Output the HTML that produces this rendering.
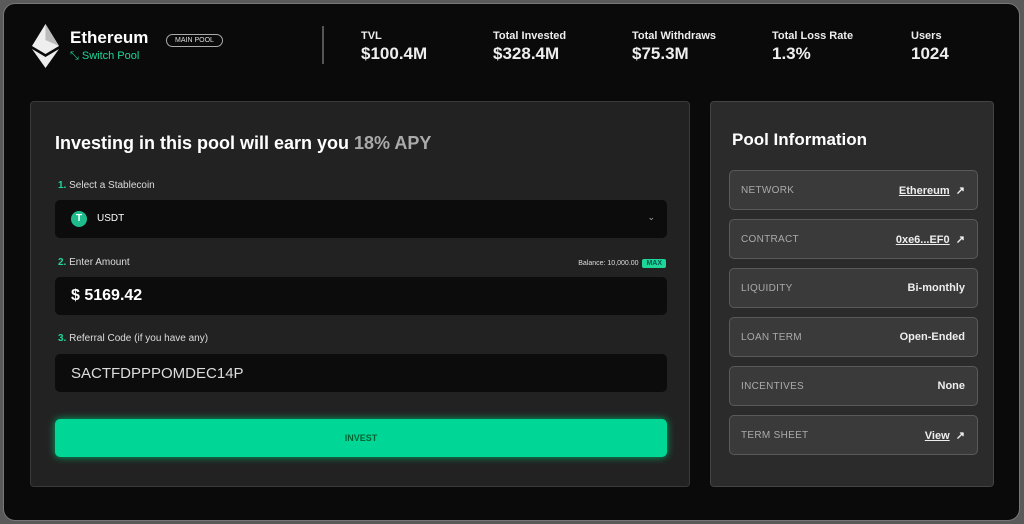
<!DOCTYPE html>
<html><head><style>
*{margin:0;padding:0;box-sizing:border-box}
body{width:1024px;height:524px;background:#5a5a5a;font-family:"Liberation Sans",sans-serif;color:#fff;overflow:hidden;position:relative}
.frame{position:absolute;left:3px;top:3px;width:1017px;height:518px;background:#0a0a0a;border-radius:12px;border:1px solid #777}
.abs{position:absolute}
.stat .l{font-size:11px;font-weight:bold;color:#eee}
.stat .v{font-size:17px;font-weight:bold;margin-top:2px;color:#eee}
.left{left:30px;top:101px;width:660px;height:386px;background:#222;border:1px solid #3a3a3a;border-radius:4px}
.right{left:710px;top:101px;width:284px;height:386px;background:#2b2b2b;border:1px solid #444;border-radius:4px}
.lab{font-size:10px;color:#ddd}
.lab b{color:#1ed796}
.inp{left:24px;width:612px;height:38px;background:#0c0c0c;border-radius:5px}
.row{position:absolute;left:18px;width:249px;height:40px;background:#3a3a3a;border:1px solid #5a5a5a;border-radius:5px;font-size:10px}
.row .k{position:absolute;left:11px;top:14px;color:#aaa;letter-spacing:.3px}
.row .v{position:absolute;right:12px;top:13px;font-weight:bold;font-size:11px;color:#eee}
.row .v u{text-decoration:underline}
</style></head><body>
<div class="frame"></div>
<svg class="abs" style="left:32px;top:24px" width="27" height="44" viewBox="0 0 27 44"><polygon points="13.5,0 27,22 13.5,30 0,22" fill="#eee"/><polygon points="13.5,0 27,22 13.5,16" fill="#bbb"/><polygon points="13.5,33 27,25 13.5,44 0,25" fill="#eee"/></svg>
<div class="abs" style="left:70px;top:28px;font-size:17px;font-weight:bold">Ethereum</div>
<div class="abs" style="left:70px;top:50px;font-size:11px;color:#1ed796">⤡ Switch Pool</div>
<div class="abs" style="left:166px;top:34px;width:57px;height:13px;border:1px solid #aaa;border-radius:7px;font-size:7px;text-align:center;line-height:11px;color:#ddd">MAIN POOL</div>
<div class="abs" style="left:322px;top:26px;width:2px;height:38px;background:#555"></div>
<div class="abs stat" style="left:361px;top:30px"><div class="l">TVL</div><div class="v">$100.4M</div></div>
<div class="abs stat" style="left:493px;top:30px"><div class="l">Total Invested</div><div class="v">$328.4M</div></div>
<div class="abs stat" style="left:632px;top:30px"><div class="l">Total Withdraws</div><div class="v">$75.3M</div></div>
<div class="abs stat" style="left:772px;top:30px"><div class="l">Total Loss Rate</div><div class="v">1.3%</div></div>
<div class="abs stat" style="left:911px;top:30px"><div class="l">Users</div><div class="v">1024</div></div>
<div class="abs left">
<div class="abs" style="left:24px;top:31px;font-size:18px;font-weight:bold">Investing in this pool will earn you <span style="color:#aaa">18% APY</span></div>
<div class="abs lab" style="left:27px;top:78px"><b>1.</b> Select a Stablecoin</div>
<div class="abs inp" style="top:98px"><div class="abs" style="left:16px;top:11px;width:16px;height:16px;border-radius:50%;background:#1ebc8c;font-size:10px;text-align:center;line-height:16px;font-weight:bold">T</div><div class="abs" style="left:42px;top:13px;font-size:10px">USDT</div><div class="abs" style="right:12px;top:12px;font-size:9px;color:#aaa">⌄</div></div>
<div class="abs lab" style="left:27px;top:155px"><b>2.</b> Enter Amount</div>
<div class="abs" style="right:23px;top:158px;font-size:7px;color:#ddd">Balance: 10,000.00 &nbsp;<span style="background:#1ed796;color:#055;padding:1px 4px;border-radius:2px;font-weight:bold">MAX</span></div>
<div class="abs inp" style="top:175px"><div class="abs" style="left:16px;top:10px;font-size:16px;font-weight:bold">$ 5169.42</div></div>
<div class="abs lab" style="left:27px;top:231px"><b>3.</b> Referral Code (if you have any)</div>
<div class="abs inp" style="top:252px"><div class="abs" style="left:16px;top:11px;font-size:15px;color:#ddd">SACTFDPPPOMDEC14P</div></div>
<div class="abs" style="left:24px;top:317px;width:612px;height:38px;background:#00d696;border-radius:5px;box-shadow:0 0 8px #0a6;text-align:center;line-height:38px;font-size:9px;font-weight:bold;color:#063">INVEST</div>
</div>
<div class="abs right">
<div class="abs" style="left:21px;top:28px;font-size:17px;font-weight:bold">Pool Information</div>
<div class="row" style="top:68px"><span class="k">NETWORK</span><span class="v"><u>Ethereum</u> &nbsp;↗</span></div>
<div class="row" style="top:117px"><span class="k">CONTRACT</span><span class="v"><u>0xe6...EF0</u> &nbsp;↗</span></div>
<div class="row" style="top:166px"><span class="k">LIQUIDITY</span><span class="v">Bi-monthly</span></div>
<div class="row" style="top:215px"><span class="k">LOAN TERM</span><span class="v">Open-Ended</span></div>
<div class="row" style="top:264px"><span class="k">INCENTIVES</span><span class="v">None</span></div>
<div class="row" style="top:313px"><span class="k">TERM SHEET</span><span class="v"><u>View</u> &nbsp;↗</span></div>
</div>
</body></html>
